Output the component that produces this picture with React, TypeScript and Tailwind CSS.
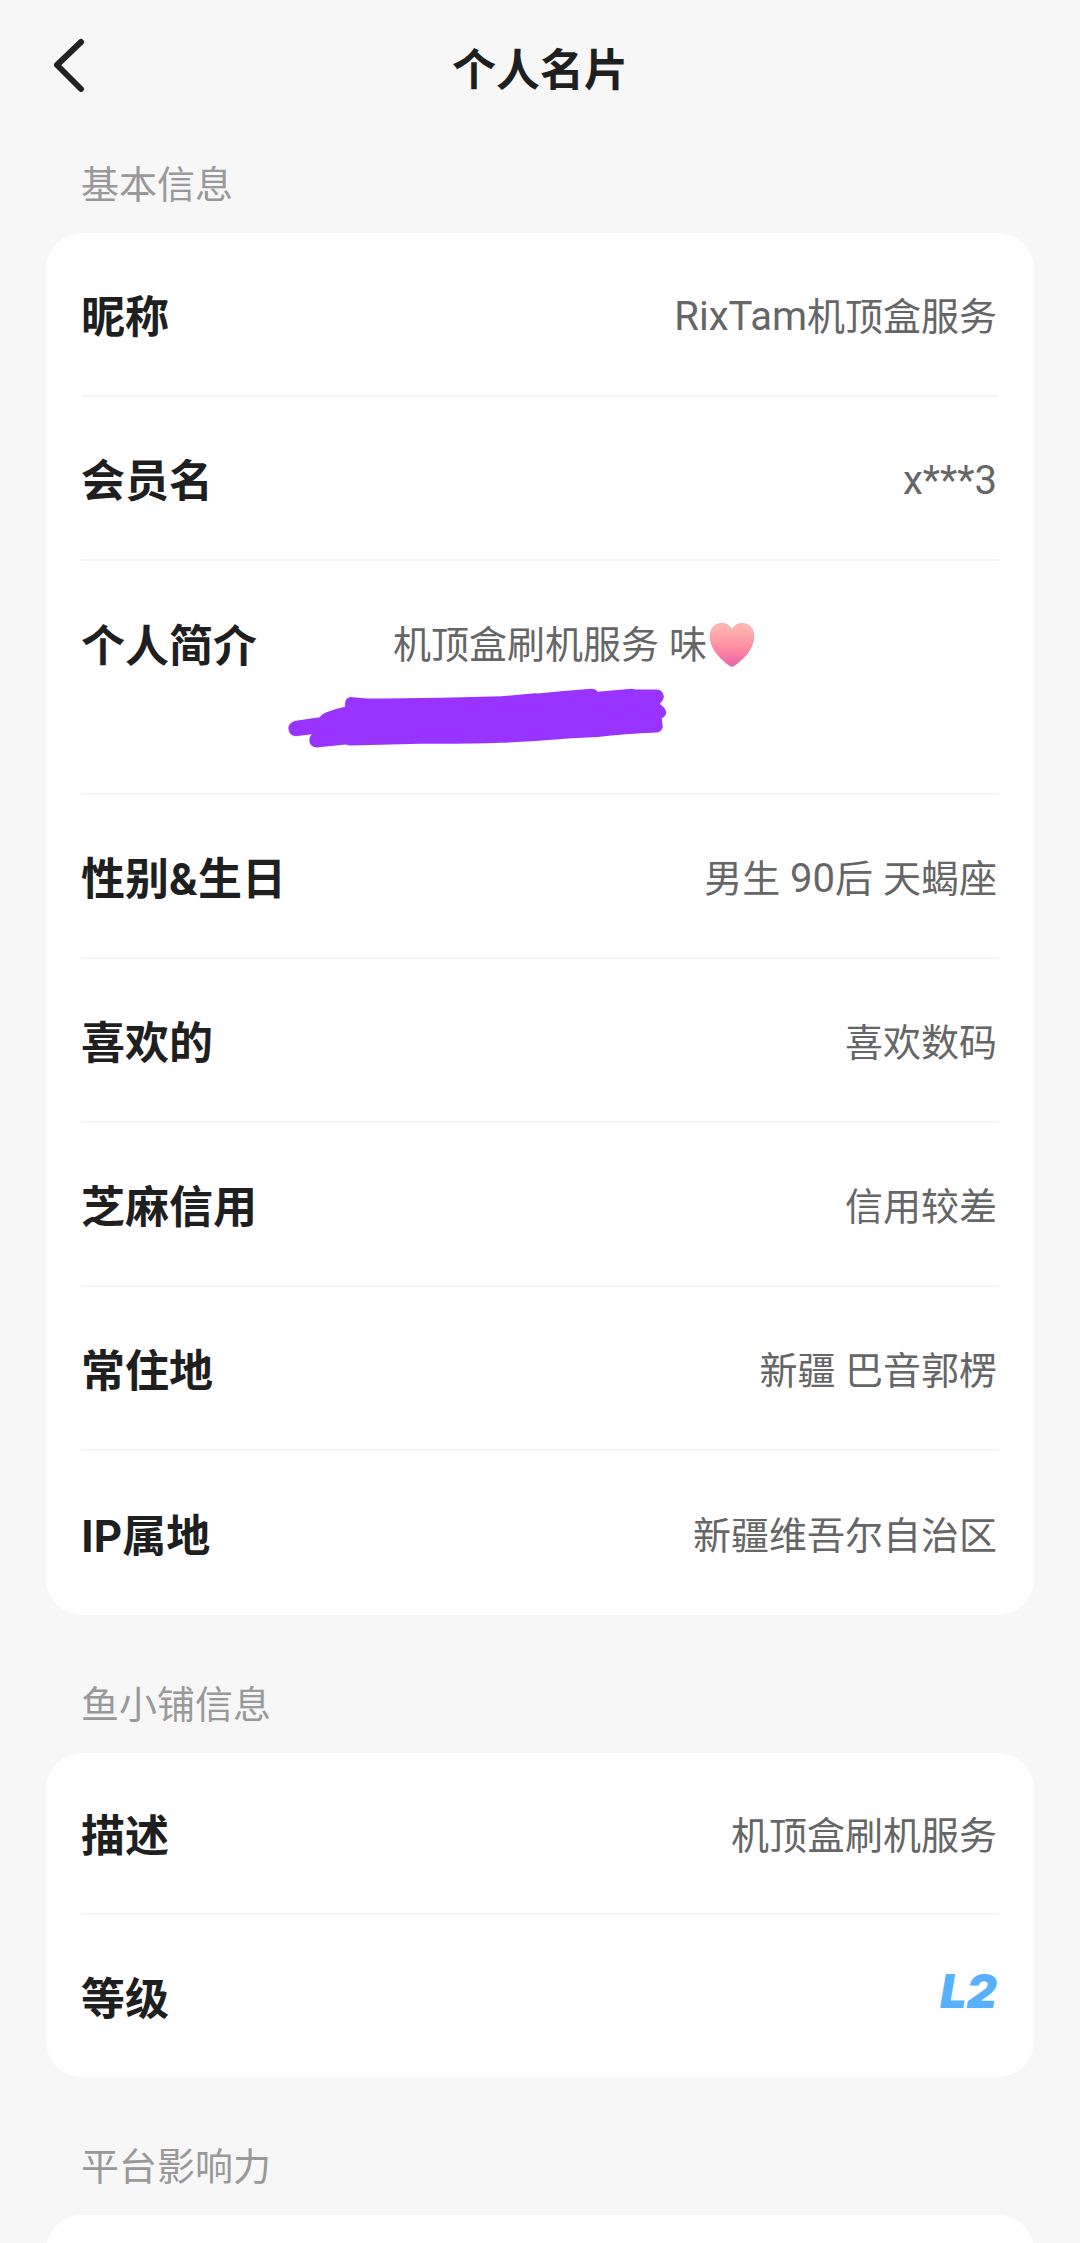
import type { ReactNode } from "react";
import { clsx } from "clsx";

type Row = {
  id: string;
  label: string;
  value: ReactNode;
};

type InfoSectionProps = {
  title: string;
  children?: ReactNode;
};

function Latin({ children }: { children: ReactNode }) {
  return <span className="text-[40px] whitespace-pre">{children}</span>;
}

function PinkHeart() {
  return (
    <svg viewBox="0 0 130 126" className="ml-0.5 inline-block h-11 w-[46px] shrink-0" role="img" aria-label="爱心">
      <defs>
        <linearGradient id="heart-fill" x1="0" y1="0" x2="0" y2="1">
          <stop offset="0" stopColor="#ffb9b6" />
          <stop offset="0.25" stopColor="#ffa9aa" />
          <stop offset="0.65" stopColor="#fe84a0" />
          <stop offset="1" stopColor="#e463b4" />
        </linearGradient>
      </defs>
      <path
        d="M65 20C59 7 48 1 36 1 16 1 2 16 2 38c0 37 32 68 57 85q6 4 12 0c25-17 57-48 57-85C128 16 114 1 94 1 82 1 71 7 65 20Z"
        fill="url(#heart-fill)"
        stroke="#e0788f"
        strokeOpacity="0.5"
        strokeWidth="2"
      />
    </svg>
  );
}

function MarkerScribble() {
  return (
    <svg
      viewBox="80 260 1105 180"
      className="absolute top-[126px] left-[207px] h-[62px] w-[380px]"
      fill="#9933ff"
      aria-hidden="true"
    >
      <path d="M262 289 310 293Q500 294 700 287L798 278 805 279Q880 271 962 265 977 266 980 274L1080 265 1092 267 1152 267Q1171 268 1173 287 1172 299 1161 309 1179 321 1180 334 1178 346 1167 350L1168 362 1170 376Q1166 391 1152 392 1060 395 980 405L905 409Q800 418 700 422 600 426 465 425L260 430 248 427 163 436Q142 434 142 415 143 402 149 397L103 403Q82 401 81 380 82 363 103 358L172 348Q178 338 190 334 220 322 246 317 243 291 262 289Z" />
    </svg>
  );
}

const basicRows: Row[] = [
  {
    id: "nickname",
    label: "昵称",
    value: (
      <>
        <Latin>RixTam</Latin>机顶盒服务
      </>
    ),
  },
  { id: "member", label: "会员名", value: <Latin>x***3</Latin> },
];

const profileRows: Row[] = [
  {
    id: "birthday",
    label: "性别&生日",
    value: (
      <>
        男生<Latin> 90</Latin>后<Latin> </Latin>天蝎座
      </>
    ),
  },
  { id: "likes", label: "喜欢的", value: "喜欢数码" },
  { id: "credit", label: "芝麻信用", value: "信用较差" },
  { id: "residence", label: "常住地", value: "新疆 巴音郭楞" },
  { id: "ip", label: "IP属地", value: "新疆维吾尔自治区" },
];

const shopRows: Row[] = [
  { id: "description", label: "描述", value: "机顶盒刷机服务" },
  {
    id: "level",
    label: "等级",
    value: <span className="block pb-4 font-['Inter',sans-serif] text-[47px] font-black text-[#56b0fb] italic">L2</span>,
  },
];

function InfoRow({ row, compact = false }: { row: Row; compact?: boolean }) {
  return (
    <div
      className={clsx(
        "flex items-center justify-between border-b-2 border-[#f5f5f5] last:border-b-0",
        compact ? "min-h-[162px]" : "min-h-[164px]",
      )}
    >
      <dt className="pt-2 text-[44px] leading-[60px] font-bold text-[#1f1f1f]">{row.label}</dt>
      <dd className="pt-1.5 pr-0.5 text-right text-[38px] leading-[56px] text-[#666]">{row.value}</dd>
    </div>
  );
}

function InfoSection({ title, children }: InfoSectionProps) {
  return (
    <section className="mb-[62px]">
      <h2 className="mb-5 px-[35px] text-[38px] leading-[56px] text-[#999]">{title}</h2>
      <dl className="min-h-[164px] rounded-[36px] bg-white px-[35px]">{children}</dl>
    </section>
  );
}

export default function App() {
  return (
    <div className="h-screen overflow-hidden bg-[#f7f7f7] font-['Roboto','Noto_Sans_CJK_SC',sans-serif]">
      <header className="grid h-[130px] grid-cols-[1fr_auto_1fr] items-center border-b border-[#f5f5f5] px-[46px]">
        <button type="button" aria-label="返回" className="flex h-[66px] w-12 items-center">
          <svg viewBox="0 0 48 66" className="h-[66px] w-12" fill="none" aria-hidden="true">
            <path
              d="M35 10 11 33 35 57"
              stroke="#222"
              strokeWidth="6"
              strokeLinecap="round"
              strokeLinejoin="round"
            />
          </svg>
        </button>
        <h1 className="pt-3 text-[44px] leading-[60px] font-bold text-[#1f1f1f]">个人名片</h1>
      </header>

      <main className="px-[46px] pt-[27px]">
        <InfoSection title="基本信息">
          {basicRows.map((row) => (
            <InfoRow key={row.id} row={row} />
          ))}

          {/* Bio, second line scribbled over */}
          <div className="relative flex min-h-[234px] items-start border-b-2 border-[#f5f5f5] pt-[54px]">
            <dt className="w-[312px] pt-0.5 text-[44px] leading-[60px] font-bold text-[#1f1f1f]">个人简介</dt>
            <dd className="flex flex-1 items-center text-[38px] leading-[60px] text-[#666]">
              机顶盒刷机服务<Latin> </Latin>味<PinkHeart />
            </dd>
            <MarkerScribble />
          </div>

          {profileRows.map((row) => (
            <InfoRow key={row.id} row={row} />
          ))}
        </InfoSection>

        <InfoSection title="鱼小铺信息">
          {shopRows.map((row) => (
            <InfoRow key={row.id} row={row} compact />
          ))}
        </InfoSection>

        <InfoSection title="平台影响力" />
      </main>
    </div>
  );
}
